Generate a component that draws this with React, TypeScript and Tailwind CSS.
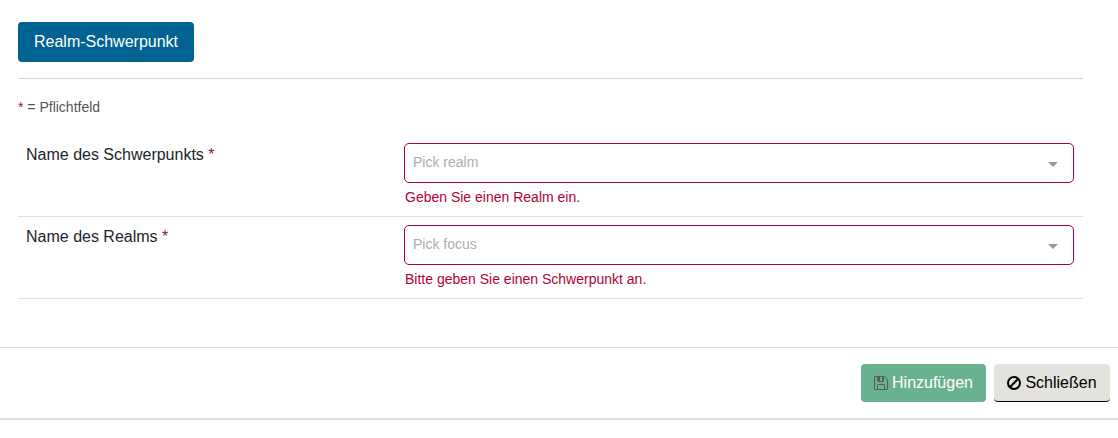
function SaveIcon() {
  return (
    <svg viewBox="0 0 14 14" className="size-[14px] text-[#5c5c5c]" fill="none" stroke="currentColor" strokeWidth="1">
      <path d="M1 .5h9.5l3 3v9.5a.5.5 0 0 1-.5.5H1a.5.5 0 0 1-.5-.5V1A.5.5 0 0 1 1 .5Z" />
      <path d="M3.5 13.5V9a.5.5 0 0 1 .5-.5h6a.5.5 0 0 1 .5.5v4.5" />
      <path d="M3.5 .5V5a.5.5 0 0 0 .5.5h5a.5.5 0 0 0 .5-.5V.5" />
      <path fill="currentColor" stroke="none" d="M3 0h3v5H3zM8 1h2v4H8z" />
    </svg>
  );
}

function BanIcon() {
  return (
    <svg viewBox="0 0 14 14" className="size-[14px]" fill="none" stroke="currentColor" strokeWidth="2">
      <circle cx="7" cy="7" r="6" />
      <path d="M2.8 11.2 11.2 2.8" />
    </svg>
  );
}

function Field({ label, placeholder, error }: { label: string; placeholder: string; error: string }) {
  return (
    <div className="flex h-[82px] border-b border-[#dee0e4] pt-2 pl-2 pr-[9px]">
      <div className="w-[378px] text-[16px] leading-6 text-[#212529]">
        {label} <span className="text-[#851c2b]">*</span>
      </div>
      <div className="flex-1">
        <div className="flex h-10 items-center justify-between rounded-[5px] border border-[#b30033] pl-2 pr-[15px] text-[14px] text-[#adadad]">
          <span className="-mt-[2px]">{placeholder}</span>
          <span className="mt-[2px] border-x-[5px] border-t-[5px] border-x-transparent border-t-[#999999]" />
        </div>
        <div className="mt-1 pl-px text-[14px] leading-[21px] text-[#b30033]">{error}</div>
      </div>
    </div>
  );
}

export default function App() {
  return (
    <div className="h-[438px] overflow-hidden bg-white font-['Liberation_Sans',Arial,sans-serif]">
      <div className="h-[420px] border-b-2 border-[#dedede]">
        <div className="h-[348px] border-b border-[#dedede] pt-[22px] pr-[35px] pl-[18px]">
          <div className="h-[57px] border-b border-[#d3d3d3]">
            <button className="h-10 w-[176px] rounded-[4px] bg-[#006392] text-[16px] text-white">Realm-Schwerpunkt</button>
          </div>
          <p className="mt-[18px] h-[38px] text-[14px] leading-[21px] text-[#555555]">
            <span className="text-[#a51c2b]">*</span> = Pflichtfeld
          </p>
          <Field label="Name des Schwerpunkts" placeholder="Pick realm" error="Geben Sie einen Realm ein." />
          <Field label="Name des Realms" placeholder="Pick focus" error="Bitte geben Sie einen Schwerpunkt an." />
        </div>
        <div className="flex justify-end gap-2 pt-4 pr-2 text-[16px]">
          <button className="flex h-[38px] w-[125px] items-center justify-center gap-1 rounded-[4px] bg-[#6ab18f] text-white">
            <SaveIcon />Hinzufügen
          </button>
          <button className="flex h-[38px] w-[116px] items-center justify-center gap-1 rounded-[4px] border-b border-black bg-[#e3e2dd] text-black">
            <BanIcon />Schließen
          </button>
        </div>
      </div>
    </div>
  );
}
